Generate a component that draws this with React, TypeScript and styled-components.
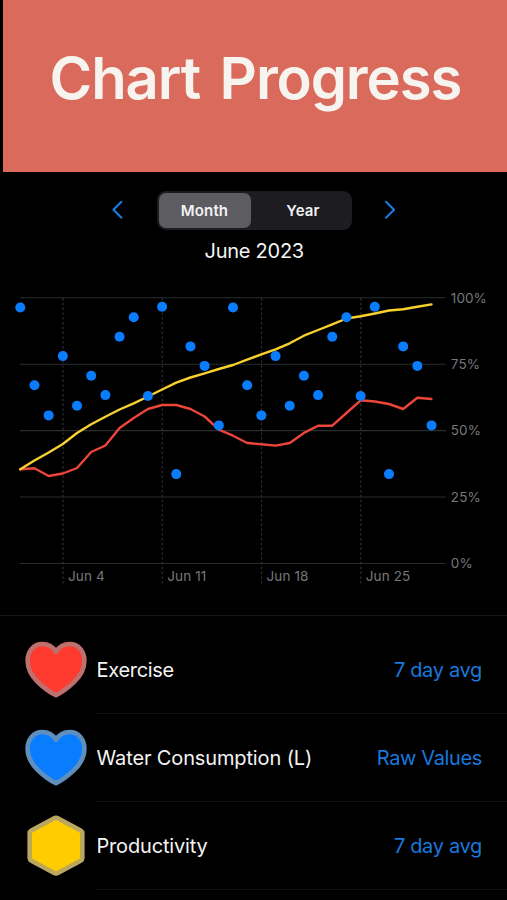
import React from "react";
import styled, { createGlobalStyle } from "styled-components";

const GlobalStyle = createGlobalStyle`
  * { box-sizing: border-box; }
  body { margin: 0; background: #000; font-family: Inter, "Liberation Sans", sans-serif; }
  button { font-family: inherit; border: 0; margin: 0; padding: 0; background: none; }
`;

const Screen = styled.main`
  display: flex;
  flex-direction: column;
  width: 507px;
  height: 900px;
  overflow: hidden;
  background: #000;
  color: #f4f4f4;
`;

const Banner = styled.header`
  flex: none;
  height: 171.6px;
  margin-left: 3px;
  padding-top: 43px;
  padding-left: 46.6px;
  background: #da6b5c;
`;

const Title = styled.h1`
  margin: 0;
  font-size: 58px;
  line-height: 70px;
  font-weight: 600;
  letter-spacing: -1.12px;
  word-spacing: 6px;
  white-space: nowrap;
  color: #f7f3ef;
`;

const PeriodBar = styled.nav`
  display: flex;
  align-items: center;
  justify-content: space-between;
  height: 39px;
  margin: 19.4px 110px 0 111px;
`;

const ArrowButton = styled.button`
  display: flex;
  width: 13px;
  height: 20px;
`;

const Segmented = styled.div`
  display: flex;
  width: 195px;
  height: 39px;
  padding: 2px;
  border-radius: 9px;
  background: #1d1c20;
`;

const Segment = styled.button<{ $active?: boolean }>`
  flex: ${(p) => (p.$active ? "0 0 92px" : "1")};
  padding-left: ${(p) => (p.$active ? "0" : "6px")};
  border-radius: 7px;
  background: ${(p) => (p.$active ? "#5d5c61" : "transparent")};
  color: #f2f2f4;
  font-size: 15px;
  font-weight: 600;
  letter-spacing: 0.15px;
`;

const PeriodLabel = styled.h2`
  margin: 8px 0 1px 1.5px;
  font-size: 20px;
  line-height: 26px;
  font-weight: 400;
  letter-spacing: -0.25px;
  text-align: center;
`;

const ChartArea = styled.section`
  flex: none;
  height: 350px;
`;

const AxisText = styled.text`
  fill: #77777b;
  font-size: 13.5px;
  letter-spacing: 0.1px;
`;

const List = styled.ul`
  margin: 0;
  padding: 0;
  list-style: none;
  border-top: 1px solid #161617;
`;

const Row = styled.li`
  display: flex;
  align-items: center;
  height: 88px;
  padding-left: 20px;
  &:first-child { height: 98px; }
`;

const Marker = styled.span`
  display: flex;
  width: 76px;
  height: 72px;
  flex: none;
  ${Row}:first-child & { margin-top: 11px; }
`;

const RowBody = styled.div`
  display: flex;
  flex: 1;
  align-self: stretch;
  align-items: center;
  justify-content: space-between;
  padding: 2px 25px 0 0.5px;
  border-bottom: 1px solid #111112;
  ${Row}:first-child & { padding-top: 12px; }
`;

const Name = styled.span<{ $spacing: number }>`
  font-size: 20px;
  letter-spacing: ${(p) => p.$spacing}px;
`;

const Mode = styled.button<{ $spacing: number }>`
  font-size: 20px;
  letter-spacing: ${(p) => p.$spacing}px;
  color: #1a78dc;
`;

const START_X = 20.3;
const STEP_X = 14.18;
const xAt = (day: number) => START_X + day * STEP_X;

const exercise = [
  469.3, 468.3, 476, 473.5, 468, 452, 445.5, 428, 418, 409, 405, 405, 409, 416.5, 429.7,
  435.7, 443, 444.3, 445.6, 443, 432.9, 425.7, 425.7, 413, 400.3, 401.5, 404, 409, 397.7, 399,
];
const productivity = [
  469.3, 460.5, 452.5, 444, 433, 424.3, 416.7, 409.5, 403.3, 396.5, 389.5, 382.6, 377.5, 373.3, 369,
  365, 359.7, 354.3, 349.3, 343.3, 335.7, 330, 324.3, 318.5, 316.3, 313.5, 310.5, 309.3, 306.8, 304.4,
];
const water = [
  307.5, 385.3, 415.4, 356.1, 405.8, 375.7, 395.1, 336.8, 317.2, 396, 306.7, 474.1, 346.4, 365.9, 425.4,
  307.5, 385.3, 415.4, 356.1, 405.8, 375.7, 395.1, 336.8, 317.2, 396, 306.7, 474.1, 346.4, 365.9, 425.4,
];

const toPoints = (values: number[]) => values.map((y, i) => `${xAt(i)},${y}`).join(" ");

const levels = [
  { y: 297.8, label: "100%" },
  { y: 364.2, label: "75%" },
  { y: 430.6, label: "50%" },
  { y: 497, label: "25%" },
  { y: 563.5, label: "0%" },
];
const weeks = [
  { day: 3, label: "Jun 4" },
  { day: 10, label: "Jun 11" },
  { day: 17, label: "Jun 18" },
  { day: 24, label: "Jun 25" },
];

function ProgressChart() {
  return (
    <svg width="507" height="350" viewBox="0 265 507 350" role="img" aria-label="June 2023 progress">
      {levels.map((l) => (
        <g key={l.label}>
          <line x1="20" x2="446" y1={l.y} y2={l.y} stroke="#2b2c2e" strokeWidth="1.1" />
          <AxisText x="450.8" y={l.y + 4.7}>{l.label}</AxisText>
        </g>
      ))}
      {weeks.map((w) => (
        <g key={w.label}>
          <line x1={xAt(w.day) + 0.2} x2={xAt(w.day) + 0.2} y1="298" y2="584" stroke="#303032" strokeWidth="1.2" strokeDasharray="2.4 2.4" />
          <AxisText x={xAt(w.day) + 5.2} y="581.3">{w.label}</AxisText>
        </g>
      ))}
      <polyline points={toPoints(exercise)} fill="none" stroke="#ec453a" strokeWidth="2.4" strokeLinejoin="round" strokeLinecap="round" />
      <polyline points={toPoints(productivity)} fill="none" stroke="#f8d12e" strokeWidth="2.4" strokeLinejoin="round" strokeLinecap="round" />
      {water.map((y, i) => (
        <circle key={i} cx={xAt(i)} cy={y} r="5" fill="#0a7dff" />
      ))}
    </svg>
  );
}

type Shape = "heart" | "hexagon";

const outlines: Record<Shape, string> = {
  heart:
    "M36 61.2C32.5 59.6 24.5 54.3 18 48.2C11.2 41.8 7.6 34.6 7.6 26.6C7.6 17 13.8 10 22.3 10C28.3 10 33 12.9 36 17.8C39 12.9 43.7 10 49.7 10C58.2 10 64.4 17 64.4 26.6C64.4 34.6 60.8 41.8 54 48.2C47.5 54.3 39.5 59.6 36 61.2Z",
  hexagon:
    "M34.2 8.3Q36 7.3 37.8 8.3L60.6 20.6Q62.3 21.6 62.3 23.4V48Q62.3 49.8 60.6 50.8L37.8 63Q36 64 34.2 63L11.4 50.8Q9.7 49.8 9.7 48V23.4Q9.7 21.6 11.4 20.6Z",
};

function ShapeIcon({ shape, fill, stroke }: { shape: Shape; fill: string; stroke: string }) {
  return (
    <svg width="72" height="72" viewBox="0 0 72 72" aria-hidden="true">
      <path d={outlines[shape]} fill={fill} stroke={stroke} strokeWidth="4.6" strokeLinejoin="round" />
    </svg>
  );
}

const habits: { name: string; mode: string; shape: Shape; fill: string; stroke: string; nameSpacing: number; modeSpacing: number }[] = [
  { name: "Exercise", mode: "7 day avg", shape: "heart", fill: "#ff3b30", stroke: "#bd706d", nameSpacing: -0.3, modeSpacing: -0.33 },
  { name: "Water Consumption (L)", mode: "Raw Values", shape: "heart", fill: "#087dff", stroke: "#608fbd", nameSpacing: -0.13, modeSpacing: -0.37 },
  { name: "Productivity", mode: "7 day avg", shape: "hexagon", fill: "#ffcc00", stroke: "#bca75f", nameSpacing: -0.18, modeSpacing: -0.33 },
];

export default function App() {
  return (
    <Screen>
      <GlobalStyle />
      <Banner>
        <Title>Chart Progress</Title>
      </Banner>
      <PeriodBar>
        <ArrowButton aria-label="Previous">
          <svg width="13" height="20" fill="none" stroke="#1681ea" strokeWidth="1.9" strokeLinecap="round" strokeLinejoin="round">
            <path d="M10.5 1.8L2.4 9.8L10.5 17.8" />
          </svg>
        </ArrowButton>
        <Segmented>
          <Segment $active>Month</Segment>
          <Segment>Year</Segment>
        </Segmented>
        <ArrowButton aria-label="Next">
          <svg width="13" height="20" fill="none" stroke="#1681ea" strokeWidth="1.9" strokeLinecap="round" strokeLinejoin="round">
            <path d="M2 1.8L10.1 9.8L2 17.8" />
          </svg>
        </ArrowButton>
      </PeriodBar>
      <PeriodLabel>June 2023</PeriodLabel>
      <ChartArea>
        <ProgressChart />
      </ChartArea>
      <List>
        {habits.map((h) => (
          <Row key={h.name}>
            <Marker>
              <ShapeIcon shape={h.shape} fill={h.fill} stroke={h.stroke} />
            </Marker>
            <RowBody>
              <Name $spacing={h.nameSpacing}>{h.name}</Name>
              <Mode $spacing={h.modeSpacing}>{h.mode}</Mode>
            </RowBody>
          </Row>
        ))}
      </List>
    </Screen>
  );
}
